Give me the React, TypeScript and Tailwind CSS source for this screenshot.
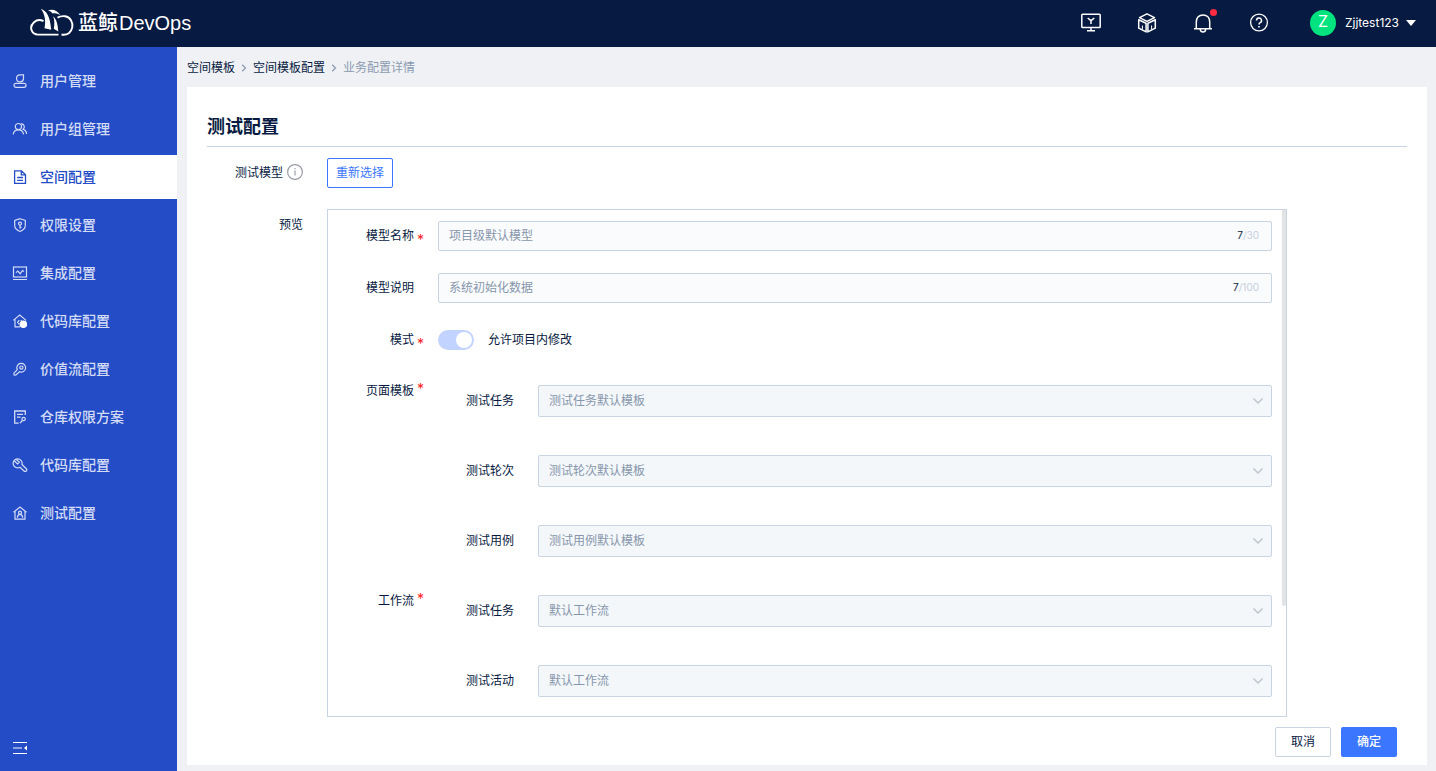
import React from 'react';

interface NavItem {
  label: string;
  icon: React.ReactNode;
  active?: boolean;
}

interface TemplateField {
  id: string;
  label: string;
  value: string;
}

interface TemplateGroup {
  title: string;
  fields: TemplateField[];
}

const navItems: NavItem[] = [
  {
    label: '用户管理',
    icon: (
      <>
        <path d="M11.500 1.800v4a3.500 3.500 0 1 1-3.500-4z" />
        <rect x="2" y="10.300" width="12" height="4" rx="2" />
      </>
    ),
  },
  {
    label: '用户组管理',
    icon: (
      <>
        <circle cx="6.400" cy="5.600" r="3.100" />
        <path d="M1.200 13.400c.3-2.800 2.400-4.600 5.200-4.600 2.700 0 4.800 1.800 5.200 4.600M9.200 2.900a3 3 0 0 1 1.900 5.400c2 .7 3.300 2.300 3.600 4.500" />
      </>
    ),
  },
  {
    label: '空间配置',
    active: true,
    icon: <path d="M9.500 1.800H2.600v12.600h10.900V5.800zM9.300 1.800v4.100h4.100M5.200 8.500h5.800M5.200 11.300h5.800" strokeWidth="1.300" />,
  },
  {
    label: '权限设置',
    icon: (
      <>
        <path d="M8 1.700 13.300 3.400v5.200c0 2.900-2.300 4.800-5.300 5.900-3-1.100-5.300-3-5.300-5.900V3.400z" />
        <circle cx="8" cy="6.600" r="1.500" />
        <path d="M8 8.100v3.600M8 10.300h1.500" />
      </>
    ),
  },
  {
    label: '集成配置',
    icon: (
      <>
        <rect x="1.500" y="2" width="13" height="10" />
        <path d="M1 14.500h14M4 7.600l1.800-1.500 2.400 2.600 2.300-3.200 1.500 1" />
      </>
    ),
  },
  {
    label: '代码库配置',
    icon: (
      <>
        <path d="M1.300 7.400 7.700 2l6.400 5.400M3 6.500v7.300h5M7.300 7.200 5.600 9.300l1.700 2M8.800 7.200l.8 1" />
        <circle cx="11.300" cy="11.300" r="3.200" fill="currentColor" className="text-white" />
      </>
    ),
  },
  {
    label: '价值流配置',
    icon: (
      <>
        <path d="M5.300 8.700a4.400 4.400 0 1 1 2.200 2.100l-3.800 3.300-1.600-.2-.2-1.700z" />
        <circle cx="9.400" cy="6.600" r="1.600" />
      </>
    ),
  },
  {
    label: '仓库权限方案',
    icon: (
      <>
        <path d="M13.300 6V2H2.700v12.200h4M5 5.300h6M5 8.200h3.500M8 14l2.300-2.300" strokeWidth="1.300" />
        <circle cx="11.600" cy="10" r="1.700" />
      </>
    ),
  },
  {
    label: '代码库配置',
    icon: (
      <path d="M8 10.200A4.500 4.500 0 1 1 10 7.500l4.300 4.200a1.600 1.600 0 0 1-2.300 2.300L8 10.200zM2.300 4 5.600 7l1.800-1.800L4.200 2.200" />
    ),
  },
  {
    label: '测试配置',
    icon: (
      <>
        <path d="M1.500 7.300 8 2l6.500 5.300M3 6.300v7.900h10V6.300" />
        <circle cx="8" cy="7.700" r="1.500" />
        <path d="M5.300 12.600c.2-2 1.200-3.200 2.700-3.200s2.500 1.200 2.700 3.200" />
      </>
    ),
  },
];

const templateGroups: TemplateGroup[] = [
  {
    title: '页面模板',
    fields: [
      { id: 'page-task', label: '测试任务', value: '测试任务默认模板' },
      { id: 'page-round', label: '测试轮次', value: '测试轮次默认模板' },
      { id: 'page-case', label: '测试用例', value: '测试用例默认模板' },
    ],
  },
  {
    title: '工作流',
    fields: [
      { id: 'flow-task', label: '测试任务', value: '默认工作流' },
      { id: 'flow-activity', label: '测试活动', value: '默认工作流' },
    ],
  },
];

const Required: React.FC<{ raised?: boolean }> = ({ raised }) => (
  <span className={`absolute right-3.5 text-sm text-[#ff1a1a] ${raised ? '-top-1.5' : 'top-1'}`}>
    *
  </span>
);

const Logo: React.FC = () => (
  <a href="#home" className="flex items-center gap-1 text-white">
    <svg width="44" height="30" viewBox="0 0 44 30" fill="none">
      <path
        d="M13.500 13.200C10.500 11.500 6.500 12 4 14.200C1.500 16.500.400 19.700 1.800 22.700C3 25.700 5 26.600 8 26.600H28.500"
        stroke="currentColor"
        strokeWidth="1.900"
      />
      <path d="M10.800 .7C16.500 2.700 20 7.700 21.200 21.700L14.500 20.200C16 13.200 15 6 10.800 .7Z" fill="currentColor" />
      <path d="M18 2.500C23 .7 27.500 2.700 30.500 7.400C28 5.500 25.500 4.800 22.500 5.400C21.500 4 20 3 18 2.500Z" fill="currentColor" />
      <path d="M23.200 8.200C26.300 11.200 27.800 15.700 28.300 23.400L23.800 20.700C24.700 16.200 24.500 12.200 23.200 8.200Z" fill="currentColor" />
      <path
        d="M27.500 9.600C32.500 6.900 38.500 7.900 41 12.200C43.600 16.900 42.500 22.200 38.800 25.200C36.500 26.800 34 27 31.500 26.500"
        stroke="currentColor"
        strokeWidth="1.900"
      />
    </svg>
    <span className="flex gap-px font-['Liberation_Sans','Noto_Sans_CJK_SC',sans-serif] text-xl leading-7 font-medium">
      <span>蓝鲸</span>
      <span>DevOps</span>
    </span>
  </a>
);

const Header: React.FC = () => (
  <header className="flex h-[47px] items-center justify-between bg-[#071a41] pr-5 pb-0.5 pl-[30px] text-white">
    <Logo />
    <div className="flex items-center">
      <div className="flex items-center gap-9">
        <button type="button" aria-label="工作台">
          <svg width="20" height="20" viewBox="0 0 20 20" fill="none" stroke="currentColor" strokeWidth="1.500">
            <rect x=".8" y="1.300" width="18.400" height="13.200" rx=".8" />
            <path d="M10 14.500v3.200M6 17.800h8M6.700 5 10 7.700l3.300-2.700M10 7.500v3.500" />
          </svg>
        </button>
        <button type="button" aria-label="服务">
          <svg width="20" height="20" viewBox="0 0 20 20" fill="none" stroke="currentColor" strokeWidth="1.500" strokeLinejoin="round">
            <path d="M10 .8 17.500 4.600 10 8.300 2.500 4.600zM1.700 6.800 9.100 10.300v8.600L1.700 15.200zM18.300 6.800l-7.400 3.500v8.600l7.400-3.700z" />
            <path d="M5.400 12.500v4M14.600 12.500v4" strokeWidth="1" />
          </svg>
        </button>
        <button type="button" aria-label="消息" className="relative">
          <svg width="20" height="20" viewBox="0 0 20 20" fill="none" stroke="currentColor" strokeWidth="1.500">
            <path d="M1 15.800h18M3.300 15.500V9C3.300 4.600 6 1.900 10 1.900s6.700 2.700 6.700 7.100v6.500M7.300 16.300a2.700 2.700 0 0 0 5.400 0" />
          </svg>
          <span className="absolute -top-1 -right-1 size-[7px] rounded-full bg-[#ff2b40]" />
        </button>
        <button type="button" aria-label="帮助">
          <svg width="20" height="20" viewBox="0 0 20 20" fill="none" stroke="currentColor" strokeWidth="1.300">
            <circle cx="10" cy="9.500" r="8.400" />
            <path d="M7.500 7.500a2.500 2.500 0 1 1 3.700 2.200c-.9.5-1.200.9-1.200 1.900M9.200 13.700h1.600" strokeWidth="1.500" />
          </svg>
        </button>
      </div>
      <button type="button" className="ml-[41px] flex items-center text-xs">
        <span className="flex size-[26px] items-center justify-center rounded-full bg-[#00e37f] pb-1 text-base leading-4">
          Z
        </span>
        <span className="ml-[9px]">Zjjtest123</span>
        <svg className="ml-[7px]" width="10" height="6" viewBox="0 0 10 6" fill="currentColor">
          <path d="M0 0h10L5 6z" />
        </svg>
      </button>
    </div>
  </header>
);

const Sidebar: React.FC = () => (
  <nav className="flex w-[177px] shrink-0 flex-col justify-between bg-[#244cc6] pt-3 pb-[15px]">
    <ul className="flex flex-col gap-1">
      {navItems.map((item, index) => (
        <li key={index}>
          <a
            href="#settings"
            className={`flex h-11 items-center gap-3 pl-3 text-sm font-medium ${
              item.active ? 'bg-white text-[#244cc6]' : 'text-[#d3dcf4]'
            }`}
          >
            <svg width="16" height="16" viewBox="0 0 16 16" fill="none" stroke="currentColor" strokeWidth="1.200">
              {item.icon}
            </svg>
            {item.label}
          </a>
        </li>
      ))}
    </ul>
    <button type="button" aria-label="收起导航" className="ml-3 self-start text-white">
      <svg width="16" height="16" viewBox="0 0 16 16" fill="none" stroke="currentColor">
        <path d="M1 2.500h14M1 13.500h14" strokeWidth="1.200" />
        <path d="M1 8h9" strokeWidth="1.600" opacity=".6" />
        <path d="M15 5.500v5L12 8z" fill="currentColor" stroke="none" />
      </svg>
    </button>
  </nav>
);

const CrumbArrow: React.FC = () => (
  <svg className="mx-1.5" width="6" height="8" viewBox="0 0 6 8" fill="none" stroke="#8c9bb0" strokeWidth="1.200">
    <path d="m1.200.8 3.300 3.200-3.300 3.200" />
  </svg>
);

const Crumbs: React.FC = () => (
  <div className="flex h-10 items-center pt-0.5 text-xs">
    <a href="#templates">空间模板</a>
    <CrumbArrow />
    <a href="#template-config">空间模板配置</a>
    <CrumbArrow />
    <span className="text-[#8c9bb0]">业务配置详情</span>
  </div>
);

interface TextFieldProps {
  id: string;
  label: string;
  value: string;
  max: number;
  required?: boolean;
}

const TextField: React.FC<TextFieldProps> = ({ id, label, value, max, required }) => (
  <div className="flex h-[30px] items-center">
    <label htmlFor={id} className="relative w-[110px] shrink-0 pr-6 text-right leading-5">
      {label}
      {required && <Required />}
    </label>
    <div className="flex h-full flex-1 items-center rounded-xs border border-[#c9d4e2] bg-[#fafbfd] px-2.5">
      <input id={id} defaultValue={value} disabled className="min-w-0 flex-1 text-[#8796ab]" />
      <span className="pr-0.5 text-[10px] text-[#c4cedc]">
        <span className="text-[#071a41]">{value.length}</span>/{max}
      </span>
    </div>
  </div>
);

const SelectField: React.FC<TemplateField> = ({ id, label, value }) => (
  <div className="flex h-8 items-center">
    <label htmlFor={id} className="w-[100px] shrink-0 pr-6 text-right">
      {label}
    </label>
    <div className="relative h-full flex-1">
      <select
        id={id}
        disabled
        className="size-full appearance-none rounded-xs border border-[#c9d4e2] bg-[#f3f7fa] px-2.5 text-[#8796ab] opacity-100"
      >
        <option>{value}</option>
      </select>
      <svg
        className="absolute top-3 right-2"
        width="12"
        height="8"
        viewBox="0 0 12 8"
        fill="none"
        stroke="#bfc5ce"
        strokeWidth="1.500"
      >
        <path d="m1.500 1.500 4.500 4.500 4.500-4.500" />
      </svg>
    </div>
  </div>
);

const ModelPreview: React.FC = () => (
  <div className="relative w-4/5 border border-[#c9d4e2] pt-[11px] pr-3.5 pb-[19px]">
    <div className="flex flex-col gap-[22px]">
      <TextField id="model-name" label="模型名称" value="项目级默认模型" max={30} required />
      <TextField id="model-desc" label="模型说明" value="系统初始化数据" max={100} />
      <div className="flex h-[30px] items-center">
        <label htmlFor="model-mode" className="relative w-[110px] shrink-0 pr-6 text-right leading-5">
          模式
          <Required />
        </label>
        <input
          id="model-mode"
          type="checkbox"
          role="switch"
          defaultChecked
          disabled
          className="flex h-5 w-9 appearance-none items-center justify-end rounded-full bg-[#c3d3ff] px-0.5 before:size-4 before:rounded-full before:bg-white"
        />
        <span className="ml-3.5">允许项目内修改</span>
      </div>
    </div>

    <div className="mt-[30px] flex flex-col gap-[38px]">
      {templateGroups.map((group) => (
        <div key={group.title} className="flex">
          <div className="relative h-3 w-[110px] shrink-0 pr-6 text-right leading-3">
            {group.title}
            <Required raised />
          </div>
          <div className="flex flex-1 flex-col gap-[38px]">
            {group.fields.map((field) => (
              <SelectField key={field.id} {...field} />
            ))}
          </div>
        </div>
      ))}
    </div>

    {/* Scroll thumb */}
    <div className="absolute top-0 right-0 h-[396px] w-1 rounded-b-sm bg-[#e2e3e5]" />
  </div>
);

const App: React.FC = () => {
  return (
    <div className="flex min-h-screen flex-col bg-[#f0f1f5] font-[Inter,'Noto_Sans_CJK_SC',sans-serif] text-xs text-[#071a41]">
      <Header />
      <div className="flex flex-1">
        <Sidebar />
        <main className="flex flex-1 flex-col pr-[9px] pb-1.5 pl-2.5">
          <Crumbs />
          <section className="flex-1 bg-white px-5 pt-5 pb-2">
            <h1 className="h-10 border-b border-[#c9d4e2] text-lg leading-10 font-bold">测试配置</h1>

            <div className="mt-[11px] flex items-center">
              <div className="flex w-[120px] shrink-0 items-center justify-end gap-1 pr-6">
                测试模型
                <svg className="mb-0.5" width="16" height="16" viewBox="0 0 16 16" fill="none" stroke="#9a9ea8">
                  <circle cx="8" cy="8" r="7.400" strokeWidth="1.200" />
                  <path d="M8 6.500v5M8 4v1.300" strokeWidth="1.200" />
                </svg>
              </div>
              <button type="button" className="h-[30px] rounded-xs border border-[#3a76ff] px-2 text-[#3a76ff]">
                重新选择
              </button>
            </div>

            <div className="mt-[21px] flex">
              <div className="w-[120px] shrink-0 pr-6 text-right leading-8">预览</div>
              <ModelPreview />
            </div>

            <div className="mt-2.5 flex justify-end gap-2.5 pr-2.5">
              <button type="button" className="h-[30px] w-14 rounded-xs border border-[#c9d4e2] bg-white">
                取消
              </button>
              <button type="button" className="h-[30px] w-14 rounded-xs bg-[#3a76ff] font-medium text-white">
                确定
              </button>
            </div>
          </section>
        </main>
      </div>
    </div>
  );
};

export default App;
